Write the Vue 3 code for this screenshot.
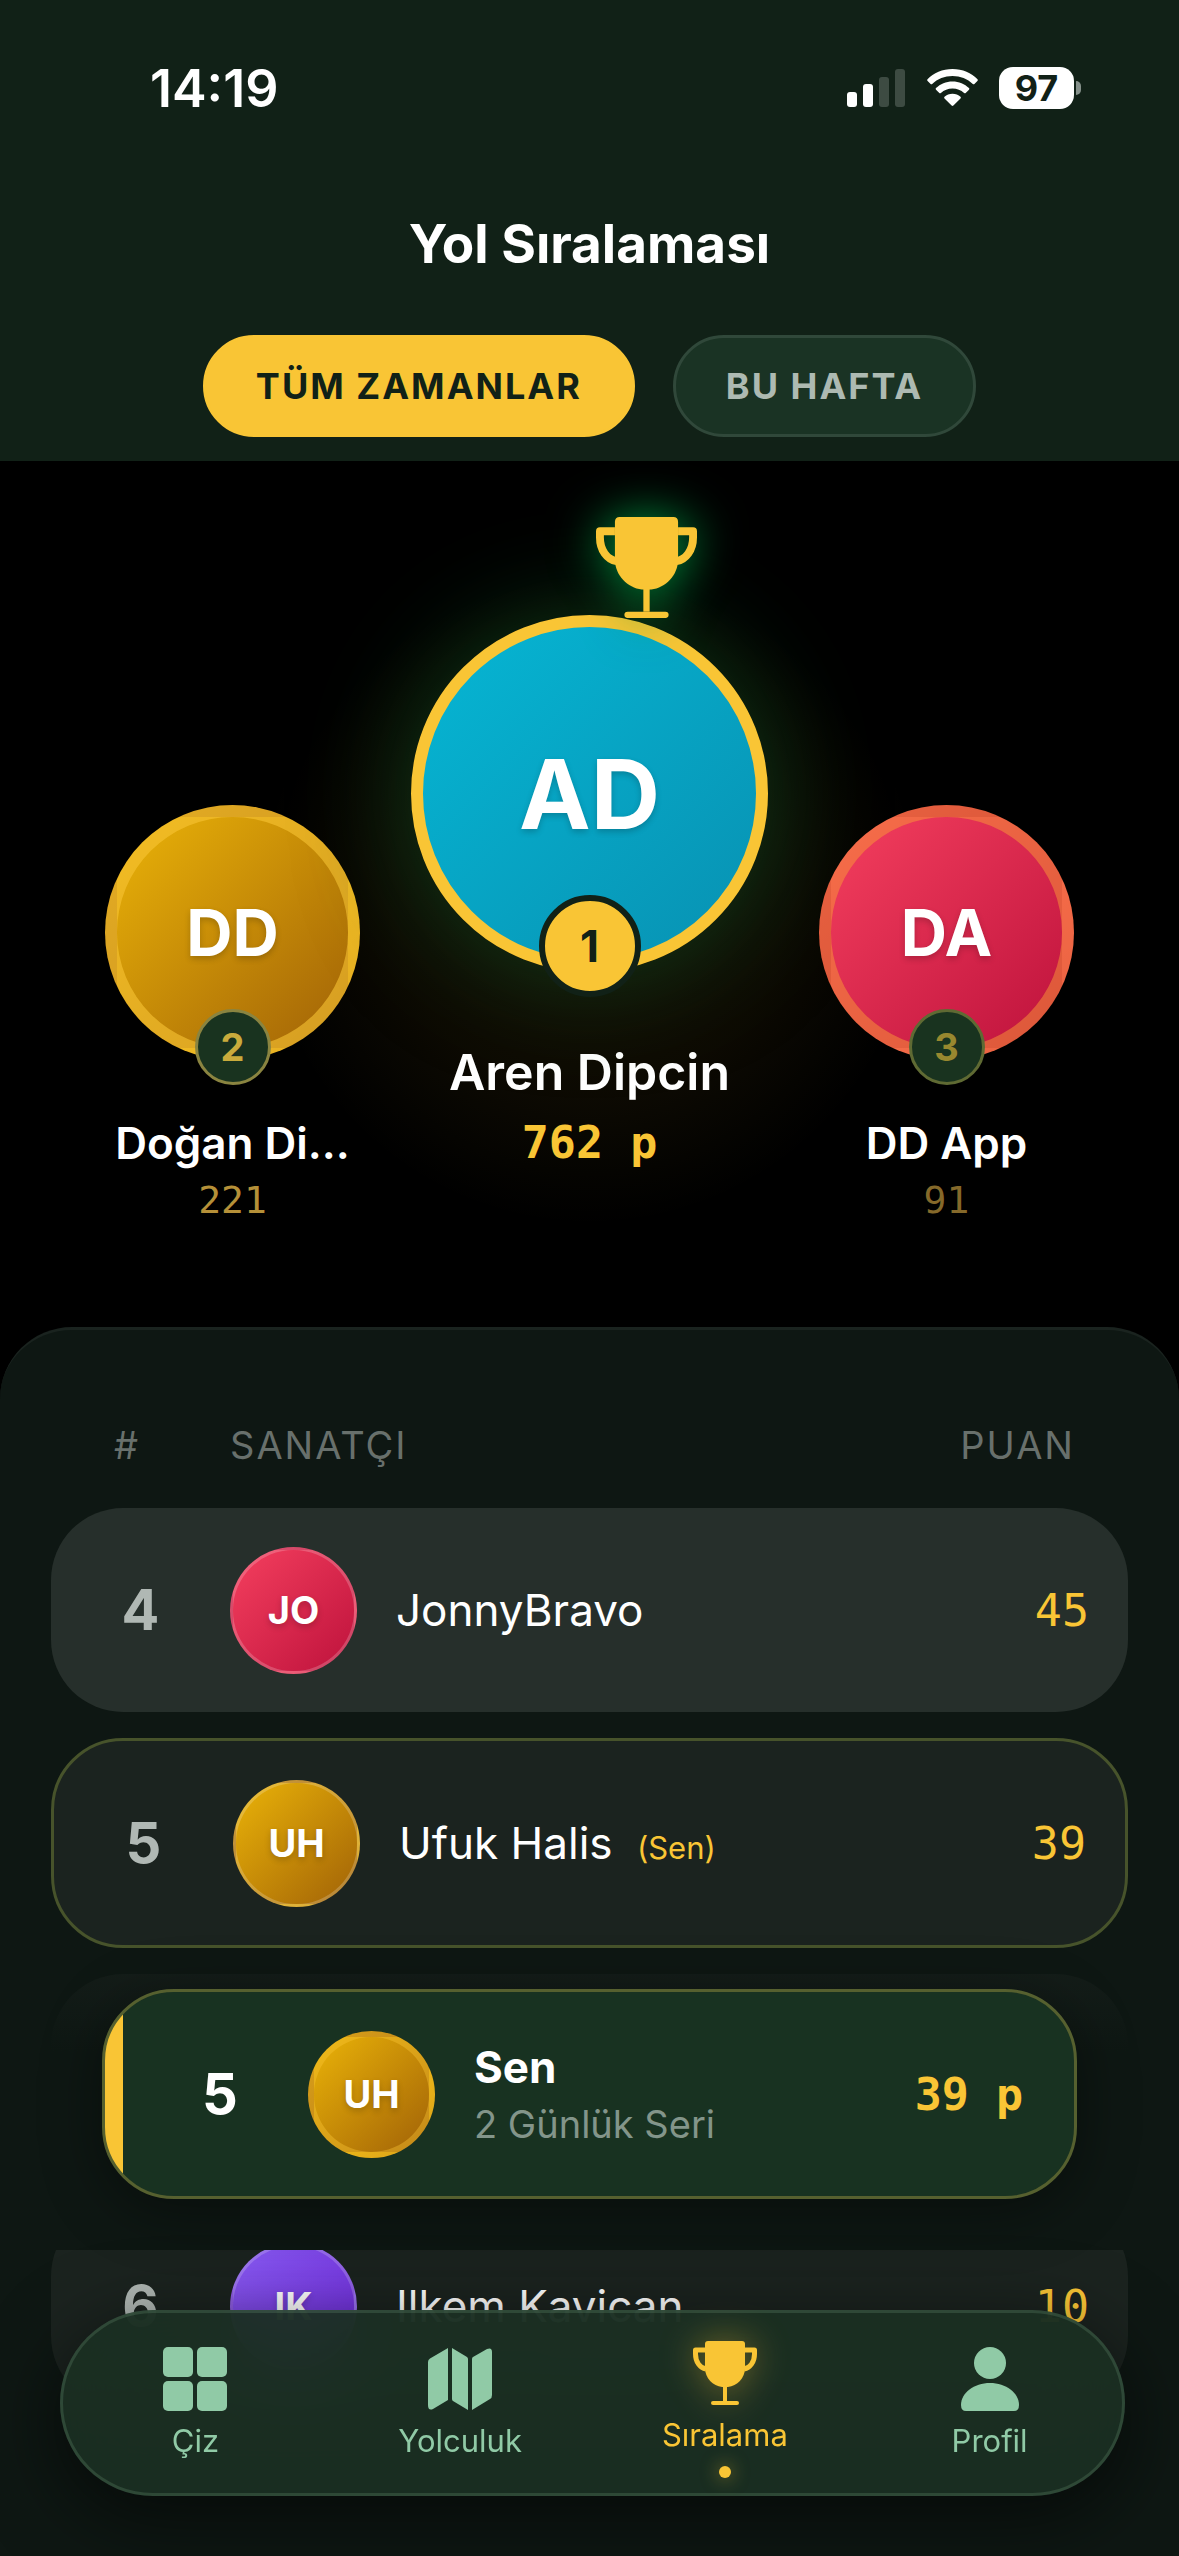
<template>
  <div class="page">
    <header class="header">
      <div class="status">
        <span class="clock">14:19</span>
        <div class="status-icons">
          <svg class="signal" viewBox="0 0 59 38">
            <rect x="0" y="23" width="10" height="15" rx="3" />
            <rect x="16" y="15" width="10" height="23" rx="3" />
            <rect class="dim" x="32" y="8" width="10" height="30" rx="3" />
            <rect class="dim" x="48" y="0" width="10" height="38" rx="3" />
          </svg>
          <svg class="wifi" viewBox="0 0 51 38">
            <path d="M25.500 0C35.500 0 44.500 4 50.500 10.300Q51.200 11.200 50.400 12L47.400 15Q46.600 15.700 45.800 14.900C40.500 9.600 33.300 6.900 25.500 6.900S10.500 9.600 5.200 14.900Q4.400 15.700 3.600 15L.6 12Q-.2 11.200 .5 10.300C6.500 4 15.500 0 25.500 0Z" />
            <path d="M25.500 12.500C31.900 12.500 37.700 15 42 19.100Q42.800 19.900 42 20.700L38.700 23.900Q38 24.600 37.100 23.900C34 21 30 19.400 25.500 19.400S17 21 13.900 23.900Q13 24.600 12.300 23.900L9 20.700Q8.200 19.900 9 19.100C13.300 15 19.100 12.500 25.500 12.500Z" />
            <path d="M25.500 24.800C28.600 24.800 31.400 25.900 33.500 27.800Q34.300 28.600 33.500 29.400L26.400 36.600Q25.500 37.400 24.600 36.600L17.500 29.400Q16.700 28.600 17.500 27.800C19.600 25.900 22.400 24.800 25.500 24.800Z" />
          </svg>
          <div class="battery">97</div>
        </div>
      </div>
      <h1>Yol Sıralaması</h1>
      <div class="tabs">
        <button
          v-for="item in tabs"
          :key="item"
          type="button"
          :class="['tab', { active: item === tab }]"
          @click="tab = item"
        >{{ item }}</button>
      </div>
    </header>

    <section class="podium">
      <div v-for="p in podium" :key="p.rank" :class="['place', 'place-' + p.rank]">
        <svg v-if="p.rank === 1" class="cup" viewBox="0 0 64 64">
          <use href="#trophy" />
        </svg>
        <div :class="['avatar', p.color]">{{ p.initials }}
          <span class="badge">{{ p.rank }}</span>
        </div>
        <div class="place-name">{{ p.name }}</div>
        <div class="place-score">{{ p.score }}</div>
      </div>
    </section>

    <section class="board">
      <table>
        <thead>
          <tr>
            <th>#</th>
            <th>SANATÇI</th>
            <th class="right">PUAN</th>
          </tr>
        </thead>
        <tbody>
          <tr v-for="row in rows" :key="row.id" :class="row.type">
            <td class="rank">{{ row.rank }}</td>
            <td><div v-if="row.initials" :class="['avatar', 'small', row.color]">{{ row.initials }}</div></td>
            <td class="name">{{ row.name }} <span v-if="row.me" class="me">(Sen)</span></td>
            <td class="score">{{ row.score }}</td>
          </tr>
        </tbody>
      </table>

      <!-- kendi sıram -->
      <div class="sticky">
        <div class="my-card">
          <span class="my-rank">5</span>
          <div class="avatar small gold">UH</div>
          <div class="my-info">
            <strong>Sen</strong>
            <span>2 Günlük Seri</span>
          </div>
          <span class="my-score">39 p</span>
        </div>
      </div>
    </section>

    <nav class="nav">
      <a
        v-for="item in menu"
        :key="item.icon"
        href="#"
        :class="['nav-item', { active: item.icon === page }]"
        @click.prevent="page = item.icon"
      >
        <svg viewBox="0 0 64 64"><use :href="'#' + item.icon" /></svg>
        <span>{{ item.label }}</span>
      </a>
    </nav>

    <svg class="symbols" aria-hidden="true">
      <symbol id="grid" viewBox="0 0 64 64">
        <rect x="0" y="0" width="30" height="30" rx="5" />
        <rect x="34" y="0" width="30" height="30" rx="5" />
        <rect x="0" y="34" width="30" height="30" rx="5" />
        <rect x="34" y="34" width="30" height="30" rx="5" />
      </symbol>
      <symbol id="map" viewBox="0 0 64 64">
        <path d="M20 1V53L5 62Q0 64 0 58V15Q0 12.500 2 11.500Z" />
        <path d="M24 1L39 10Q40 11 40 12V63L25 54Q24 53.500 24 52Z" />
        <path d="M44 63V12Q44 10.500 45 10L59 2Q64 0 64 5V48Q64 51 62 52Z" />
      </symbol>
      <symbol id="trophy" viewBox="0 0 64 64">
        <path d="M15 0H49Q52 0 52 3V27C52 37 44 45 35 46H29C20 45 12 37 12 27V3Q12 0 15 0Z" />
        <path class="line" d="M12 9H2.500V13C2.500 21 7 27 13 28M52 9H61.500V13C61.500 21 57 27 51 28" />
        <path d="M30 44H34V60H30Z" />
        <rect x="18" y="60" width="28" height="4" rx="2" />
      </symbol>
      <symbol id="profile" viewBox="0 0 64 64">
        <circle cx="32" cy="16" r="16" />
        <path d="M32 36C48 36 61 46 61 58Q61 64 56 64H8Q3 64 3 58C3 46 16 36 32 36Z" />
      </symbol>
    </svg>
  </div>
</template>

<script setup>
import { ref } from 'vue'

const tabs = ['TÜM ZAMANLAR', 'BU HAFTA']
const tab = ref('TÜM ZAMANLAR')
const page = ref('trophy')

const podium = [
  { rank: 2, initials: 'DD', name: 'Doğan Di...', score: '221', color: 'gold' },
  { rank: 1, initials: 'AD', name: 'Aren Dipcin', score: '762 p', color: 'cyan' },
  { rank: 3, initials: 'DA', name: 'DD App', score: '91', color: 'rose' },
]

const rows = [
  { id: 1, rank: 4, initials: 'JO', name: 'JonnyBravo', score: 45, color: 'rose', type: 'light' },
  { id: 2, rank: 5, initials: 'UH', name: 'Ufuk Halis', score: 39, color: 'gold', type: 'mine', me: true },
  { id: 3, score: 39 },
  { id: 4, rank: 6, initials: 'IK', name: 'Ilkem Kavican', score: 10, color: 'violet' },
]

const menu = [
  { icon: 'grid', label: 'Çiz' },
  { icon: 'map', label: 'Yolculuk' },
  { icon: 'trophy', label: 'Sıralama' },
  { icon: 'profile', label: 'Profil' },
]
</script>

<style>
body {
  background: #000;
}
</style>

<style scoped>
.page {
  position: relative;
  display: flex;
  flex-direction: column;
  min-height: 100vh;
  overflow: hidden;
  color: #fff;
  font-family: Inter, "Liberation Sans", sans-serif;
}

.symbols {
  position: absolute;
  width: 0;
  height: 0;
}

/* header */
.header {
  background: #112117;
  padding: 61px 0 24px;
}

.status {
  display: flex;
  justify-content: space-between;
  align-items: center;
  height: 54px;
  padding: 0 98px 0 150px;
}

.clock {
  font-size: 52px;
  font-weight: 600;
}

.status-icons {
  display: flex;
  align-items: center;
  gap: 21px;
  fill: #fff;
}

.signal {
  width: 59px;
  height: 38px;
}

.dim {
  fill: #3d4b42;
}

.wifi {
  width: 51px;
  height: 38px;
}

.battery {
  position: relative;
  width: 75px;
  margin-right: 7px;
  border-radius: 14px;
  background: #fff;
  color: #112117;
  font-size: 36px;
  font-weight: 700;
  line-height: 42px;
  text-align: center;
}

.battery::after {
  content: "";
  position: absolute;
  right: -7px;
  top: 14px;
  width: 5px;
  height: 14px;
  border-radius: 0 5px 5px 0;
  background: #85908a;
}

h1 {
  margin: 96px 0 58px;
  font-size: 53px;
  font-weight: 700;
  line-height: 66px;
  text-align: center;
}

.tabs {
  display: flex;
  justify-content: center;
  gap: 38px;
}

.tab {
  height: 102px;
  padding: 0 50px;
  border: 3px solid #30483a;
  border-radius: 51px;
  background: #1a3324;
  color: #adbab2;
  font-family: inherit;
  font-size: 36px;
  font-weight: 700;
  letter-spacing: 2px;
}

.tab.active {
  border-color: #f9c535;
  background: #f9c535;
  color: #112117;
}

/* podium */
.podium {
  display: flex;
  justify-content: center;
  align-items: flex-end;
  gap: 51px;
  padding: 154px 0 103px;
  background: radial-gradient(circle 330px at 50% 435px, rgba(249, 197, 53, 0.09), rgba(249, 197, 53, 0.05) 60%, transparent);
}

.place {
  position: relative;
  width: 255px;
  text-align: center;
}

.place-1 {
  width: 357px;
  margin-bottom: 54px;
}

.avatar {
  position: relative;
  box-sizing: border-box;
  display: flex;
  justify-content: center;
  align-items: center;
  height: 255px;
  border: 12px solid rgba(249, 197, 53, 0.6);
  border-radius: 50%;
  font-size: 64px;
  font-weight: 700;
  text-shadow: 0 3px 6px rgba(0, 0, 0, 0.2);
}

.place-3 .avatar {
  border-color: rgba(249, 155, 53, 0.5);
}

.place-1 .avatar {
  height: 357px;
  border-color: #f9c535;
  font-size: 96px;
  box-shadow: 0 0 110px rgba(16, 92, 40, 0.6);
}

.gold {
  background-image: linear-gradient(135deg, #eab308, #a16207);
}

.cyan {
  background-image: linear-gradient(135deg, #06b6d4, #0891b2);
}

.rose {
  background-image: linear-gradient(135deg, #f43f5e, #be123c);
}

.violet {
  background-image: linear-gradient(135deg, #8b5cf6, #6d28d9);
}

.cup {
  position: absolute;
  left: 185px;
  top: -98px;
  z-index: 1;
  width: 101px;
  height: 101px;
  fill: #f9c535;
  stroke: #f9c535;
  overflow: visible;
  filter: drop-shadow(0 0 24px rgba(0, 150, 65, 1));
}

#trophy path,
#trophy rect {
  stroke: none;
}

#trophy .line {
  fill: none;
  stroke: #f9c535;
  stroke-width: 5;
  stroke-linejoin: round;
}

.badge {
  position: absolute;
  left: 50%;
  bottom: -37px;
  box-sizing: border-box;
  width: 76px;
  height: 76px;
  margin-left: -38px;
  border: 3px solid #8a8440;
  border-radius: 50%;
  background: #19331f;
  color: #c9ab3c;
  font-size: 38px;
  line-height: 70px;
  text-shadow: none;
}

.place-3 .badge {
  border-color: #5f6a33;
  color: #98882f;
}

.place-1 .badge {
  width: 102px;
  height: 102px;
  margin-left: -51px;
  border: 6px solid #112117;
  background: #f9c535;
  color: #112117;
  font-size: 44px;
  line-height: 90px;
}

.place-name {
  margin-top: 56px;
  font-size: 44px;
  font-weight: 600;
  line-height: 54px;
}

.place-1 .place-name {
  margin-top: 70px;
  font-size: 50px;
  line-height: 60px;
}

.place-score {
  margin-top: 6px;
  color: #b59038;
  font-family: "DejaVu Sans Mono", monospace;
  font-size: 38px;
  line-height: 48px;
}

.place-3 .place-score {
  color: #85692a;
}

.place-1 .place-score {
  margin-top: 14px;
  color: #f9c535;
  font-size: 45px;
  font-weight: 700;
  line-height: 54px;
}

/* list */
.board {
  position: relative;
  flex: 1;
  padding: 88px 51px 148px;
  border-top: 3px solid #1a231f;
  border-radius: 72px 72px 0 0;
  background: #0e1713;
}

table,
thead {
  display: block;
}

tbody {
  display: flex;
  flex-direction: column;
  gap: 26px;
}

tr {
  display: grid;
  grid-template-columns: 101px 127px 1fr auto;
  align-items: center;
  gap: 39px;
}

th,
td {
  padding: 0;
}

thead tr {
  grid-template-columns: 77px 1fr auto;
  margin-bottom: 36px;
  padding: 0 53px 0 63px;
}

th {
  color: #68706c;
  font-size: 38px;
  font-weight: 400;
  letter-spacing: 2px;
  line-height: 54px;
  text-align: left;
}

tbody tr {
  height: 204px;
  padding: 0 39px;
  border-radius: 72px;
  background: #1b231f;
}

tbody .light {
  background: #262f2b;
}

tbody .mine {
  border: 3px solid #47532b;
}

.rank {
  color: #b0b8b4;
  font-size: 56px;
  font-weight: 700;
  text-align: center;
}

.small {
  width: 127px;
  height: 127px;
  border: 3px solid rgba(255, 255, 255, 0.2);
  font-size: 38px;
}

.name {
  font-size: 44px;
  font-weight: 400;
}

.me {
  margin-left: 12px;
  color: #f9c535;
  font-size: 31px;
}

.score {
  color: #f9c535;
  font-family: "DejaVu Sans Mono", monospace;
  font-size: 45px;
}

.sticky {
  position: absolute;
  left: 0;
  right: 0;
  bottom: 306px;
  padding: 39px 102px 51px;
  background: linear-gradient(rgba(14, 23, 19, 0.4), #0e1713 34%);
}

.my-card {
  position: relative;
  display: flex;
  align-items: center;
  height: 204px;
  padding: 0 51px 0 27px;
  border: 3px solid #56602f;
  border-radius: 72px;
  background: linear-gradient(90deg, #f9c535 18px, #183221 18px);
  box-shadow: 0 12px 60px rgba(0, 0, 0, 0.4);
}

.my-rank {
  width: 176px;
  font-size: 56px;
  font-weight: 700;
  text-align: center;
}

.my-card .avatar {
  flex: none;
  border: 6px solid rgba(249, 197, 53, 0.4);
}

.my-info {
  display: flex;
  flex: 1;
  flex-direction: column;
  margin-left: 39px;
}

.my-info strong {
  font-size: 44px;
  font-weight: 700;
  line-height: 60px;
}

.my-info span {
  color: #83958a;
  font-size: 38px;
  line-height: 54px;
}

.my-score {
  color: #f9c535;
  font-family: "DejaVu Sans Mono", monospace;
  font-size: 45px;
  font-weight: 700;
}

/* nav */
.nav {
  position: absolute;
  left: 60px;
  right: 54px;
  bottom: 60px;
  display: flex;
  height: 180px;
  border: 3px solid rgba(110, 150, 120, 0.25);
  border-radius: 93px;
  background: rgba(27, 47, 34, 0.94);
  backdrop-filter: blur(40px);
  box-shadow: 0 20px 80px rgba(0, 0, 0, 0.6);
}

.nav-item {
  position: relative;
  display: flex;
  flex: 1;
  flex-direction: column;
  align-items: center;
  justify-content: center;
  gap: 12px;
  color: #90caa6;
  fill: #90caa6;
  font-size: 31px;
  font-weight: 400;
  line-height: 36px;
  text-decoration: none;
}

.nav-item svg {
  width: 64px;
  height: 64px;
}

.nav-item.active {
  padding-bottom: 12px;
  color: #f9c535;
  fill: #f9c535;
}

.nav-item.active svg {
  overflow: visible;
  filter: drop-shadow(0 0 18px rgba(249, 197, 53, 0.4));
}

.nav-item.active::after {
  content: "";
  position: absolute;
  bottom: 15px;
  width: 12px;
  height: 12px;
  border-radius: 50%;
  background: #f9c535;
  box-shadow: 0 0 18px rgba(249, 197, 53, 0.6);
}
</style>
